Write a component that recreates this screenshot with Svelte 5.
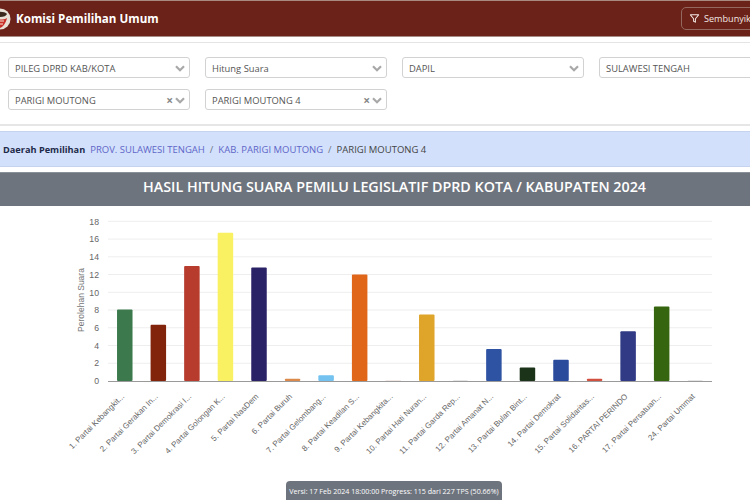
<script lang="ts">
  const filters = [
    { text: 'PILEG DPRD KAB/KOTA' },
    { text: 'Hitung Suara' },
    { text: 'DAPIL' },
    { text: 'SULAWESI TENGAH' },
    { text: 'PARIGI MOUTONG', clear: true },
    { text: 'PARIGI MOUTONG 4', clear: true }
  ];

  const parties = [
    { label: '1. Partai Kebangkit...', value: 8.07, color: '#3c7a4e' },
    { label: '2. Partai Gerakan In...', value: 6.35, color: '#82240c' },
    { label: '3. Partai Demokrasi I...', value: 12.97, color: '#b73c2d' },
    { label: '4. Partai Golongan K...', value: 16.7, color: '#f9f162' },
    { label: '5. Partai NasDem', value: 12.8, color: '#2a2267' },
    { label: '6. Partai Buruh', value: 0.25, color: '#dc8a4c' },
    { label: '7. Partai Gelombang...', value: 0.65, color: '#73c2f0' },
    { label: '8. Partai Keadilan S...', value: 12, color: '#e0661a' },
    { label: '9. Partai Kebangkita...', value: 0.04, color: '#c9a9a0' },
    { label: '10. Partai Hati Nuran...', value: 7.5, color: '#dfa42a' },
    { label: '11. Partai Garda Rep...', value: 0.03, color: '#999' },
    { label: '12. Partai Amanat N...', value: 3.6, color: '#2f53a3' },
    { label: '13. Partai Bulan Bint...', value: 1.53, color: '#1b3319' },
    { label: '14. Partai Demokrat', value: 2.4, color: '#2a4a9c' },
    { label: '15. Partai Solidaritas...', value: 0.25, color: '#d2503f' },
    { label: '16. PARTAI PERINDO', value: 5.6, color: '#303a85' },
    { label: '17. Partai Persatuan...', value: 8.4, color: '#35660f' },
    { label: '24. Partai Ummat', value: 0.03, color: '#999' }
  ];

  const ticks = [0, 2, 4, 6, 8, 10, 12, 14, 16, 18];

  // chart geometry, in px of the svg
  const left = 108;
  const right = 712;
  const zero = 175;
  const unit = 8.87;
  const slot = (right - left) / parties.length;
  const barWidth = 15.5;
</script>

<div class="screen">
  <div class="page">
    <header class="topbar">
      <div class="brand">
        <svg class="logo" width="24" height="24" viewBox="0 0 24 24">
          <circle cx="12" cy="12" r="10.5" fill="#e9e2d6" />
          <path d="M5 7c2-3 12-3 14 0-1 2-3 3-7 3S6 9 5 7z" fill="#3a2a1e" />
          <path d="M5 11c3 2 11 2 14 0-1 5-4 9-7 10-3-1-6-5-7-10z" fill="#c9302a" />
          <path d="M8 14h8M9 17h6" stroke="#f3e6d0" stroke-width="1.2" />
        </svg>
        <span class="brand-name">Komisi Pemilihan Umum</span>
      </div>
      <button class="toggle">
        <svg width="11" height="11" viewBox="0 0 24 24" fill="none" stroke="currentColor" stroke-width="2.2" stroke-linejoin="round">
          <path d="M3 4h18l-7 8.5V20l-4-2v-5.5L3 4z" />
        </svg>
        Sembunyikan
      </button>
    </header>

    <section class="filters">
      {#each filters as f}
        <div class="select">
          <span class="select-text">{f.text}</span>
          {#if f.clear}
            <span class="clear">×</span>
          {/if}
          <svg class="chevron" width="10" height="7" viewBox="0 0 10 7" fill="none" stroke="#a8a8a8" stroke-width="2.2">
            <path d="M1 1.2l4 4 4-4" />
          </svg>
        </div>
      {/each}
    </section>

    <nav class="crumbs">
      <strong>Daerah Pemilihan</strong>
      <span class="link">PROV. SULAWESI TENGAH</span>
      <span class="sep">/</span>
      <span class="link">KAB. PARIGI MOUTONG</span>
      <span class="sep">/</span>
      <span class="current">PARIGI MOUTONG 4</span>
    </nav>

    <h1 class="title">HASIL HITUNG SUARA PEMILU LEGISLATIF DPRD KOTA / KABUPATEN 2024</h1>

    <svg class="chart" width="750" height="295" viewBox="0 0 750 295">
      {#each ticks as t}
        {#if t > 0}
          <line x1={left} x2={right} y1={zero - t * unit} y2={zero - t * unit} stroke="#eeeeee" />
        {/if}
        <text class="tick" x="99" y={zero - t * unit + 3.2} text-anchor="end">{t}</text>
      {/each}

      <text class="axis-title" transform="translate(84 94) rotate(-90)" text-anchor="middle">Perolehan Suara</text>

      {#each parties as p, i}
        <rect
          x={left + slot * (i + 0.5) - barWidth / 2}
          y={zero - p.value * unit}
          width={barWidth}
          height={p.value * unit}
          rx="1"
          fill={p.color}
        />
        <text
          class="cat"
          transform="translate({left + slot * (i + 0.5)} 191) rotate(-45)"
          text-anchor="end">{p.label}</text>
      {/each}

      <line x1={left} x2={right} y1={zero + 0.5} y2={zero + 0.5} stroke="#9a9a9a" />
    </svg>

    <div class="version">Versi: 17 Feb 2024 18:00:00 Progress: 115 dari 227 TPS (50.66%)</div>
  </div>
</div>

<style>
  :global(body) {
    margin: 0;
    background: #fff;
  }

  .screen {
    width: 750px;
    height: 500px;
    overflow: hidden;
  }

  .page {
    position: relative;
    width: 789px;
    height: 500px;
    font-family: "Open Sans", "Noto Sans", sans-serif;
  }

  .topbar {
    display: flex;
    justify-content: space-between;
    align-items: center;
    box-sizing: border-box;
    height: 37px;
    padding-right: 8px;
    background: #6b2218;
    border-top: 1px solid #a98a80;
    border-bottom: 1px solid #a88d86;
  }

  .brand {
    display: flex;
    align-items: center;
    gap: 4px;
    margin-left: -12px;
  }

  .brand-name {
    color: #fff;
    font-size: 11.6px;
    font-weight: 700;
  }

  .toggle {
    display: flex;
    align-items: center;
    gap: 4px;
    width: 100px;
    height: 23px;
    padding: 0 0 0 7px;
    background: transparent;
    border: 1px solid #94685f;
    border-radius: 5px;
    color: #f2e6e3;
    font-family: inherit;
    font-size: 9.1px;
    white-space: nowrap;
  }

  .filters {
    display: grid;
    grid-template-columns: repeat(4, 182px);
    column-gap: 15px;
    row-gap: 11px;
    align-content: start;
    height: 84px;
    box-sizing: border-box;
    margin-top: 5px;
    padding: 14px 8px 0;
    background: #fff;
    border-top: 1px solid #e4e4e4;
    border-bottom: 2px solid #e6e6e6;
  }

  .select {
    display: flex;
    align-items: center;
    box-sizing: border-box;
    height: 21px;
    padding: 2px 4px 0 6px;
    background: #fff;
    border: 1px solid #d2d2d2;
    border-radius: 3px;
    color: #555;
    font-size: 9.4px;
  }

  .select-text {
    flex: 1;
    white-space: nowrap;
  }

  .clear {
    margin-right: 2px;
    color: #888;
    font-size: 12px;
    font-weight: 700;
    line-height: 1;
  }

  .crumbs {
    display: flex;
    align-items: center;
    gap: 5px;
    box-sizing: border-box;
    height: 36px;
    margin-top: 5px;
    padding-left: 3px;
    background: #d2e0fb;
    border-top: 1px solid #c5d3ee;
    border-bottom: 1px solid #c5d3ee;
    font-size: 9.5px;
    white-space: nowrap;
  }

  .crumbs strong {
    color: #1e2a4a;
    font-size: 9.2px;
    font-weight: 700;
  }

  .link {
    color: #5f66c8;
  }

  .sep {
    color: #6d7488;
  }

  .current {
    color: #444;
  }

  .title {
    box-sizing: border-box;
    height: 34px;
    margin: 5px 0 0;
    background: #6e747e;
    border-top: 1px solid #8a9097;
    color: #fff;
    font-size: 14.3px;
    font-weight: 600;
    line-height: 27px;
    text-align: center;
    white-space: nowrap;
  }

  .chart {
    display: block;
  }

  .tick {
    fill: #666;
    font-family: "Liberation Sans", Arial, sans-serif;
    font-size: 8.7px;
  }

  .axis-title {
    fill: #777;
    font-family: "Liberation Sans", Arial, sans-serif;
    font-size: 8.5px;
  }

  .cat {
    fill: #666;
    font-family: "Liberation Sans", Arial, sans-serif;
    font-size: 8px;
  }

  .version {
    position: absolute;
    left: 286px;
    bottom: 0;
    display: flex;
    justify-content: center;
    align-items: center;
    width: 216px;
    height: 19px;
    box-sizing: border-box;
    background: #6e747e;
    border-radius: 4px 4px 0 0;
    color: #fff;
    font-family: "Open Sans", sans-serif;
    font-size: 7.1px;
    white-space: nowrap;
  }
</style>
